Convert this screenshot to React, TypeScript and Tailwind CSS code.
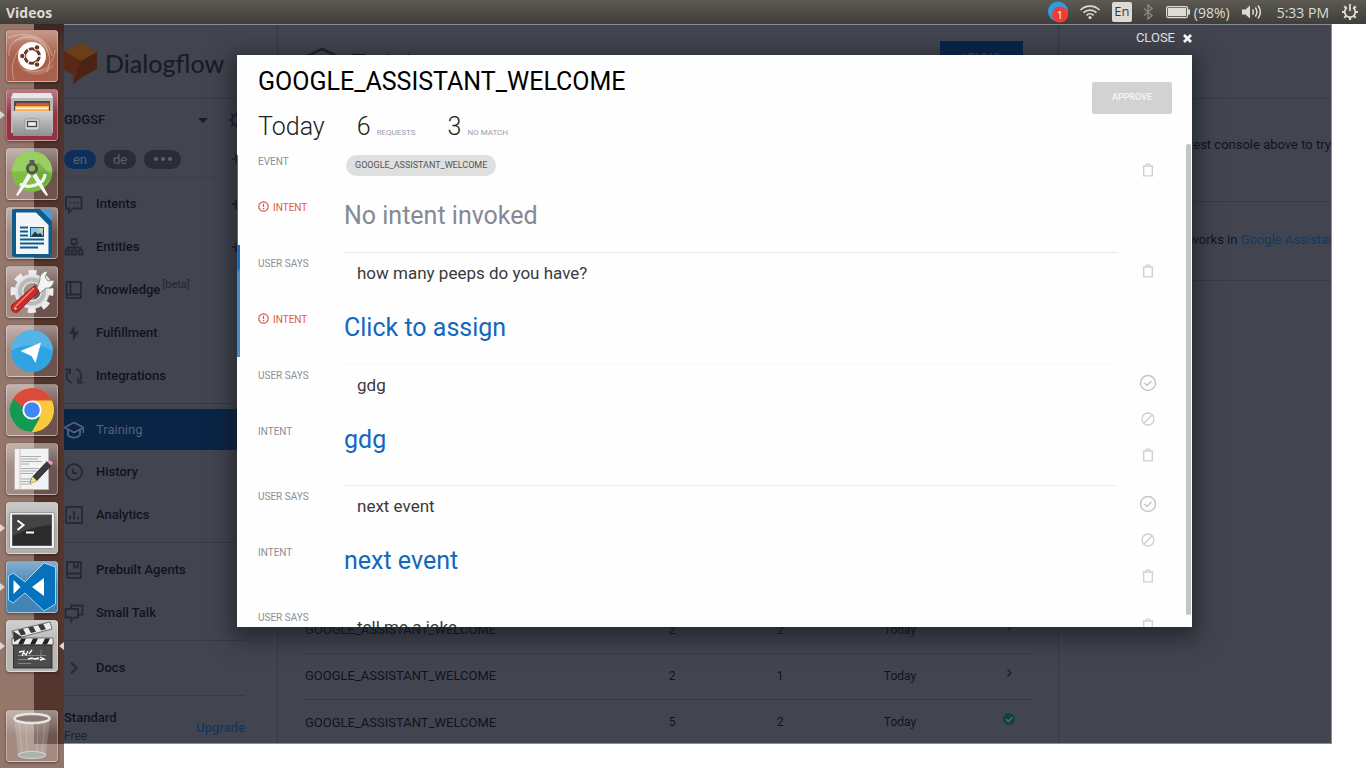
import React from "react";

type IconProps = { className?: string };

/* ---------- System bar ---------- */

function TelegramBadge() {
  return (
    <svg width="22" height="22" viewBox="0 0 22 22" aria-hidden="true">
      <circle cx="11" cy="10.5" r="10" fill="#2d9fe0" />
      <circle cx="13" cy="13.5" r="8" fill="#f23b36" />
      <text x="13" y="18" textAnchor="middle" fontSize="11" fill="#fff" fontFamily="Open Sans, sans-serif">1</text>
    </svg>
  );
}

function WifiIcon() {
  return (
    <svg width="22" height="16" viewBox="0 0 22 16" fill="none" stroke="#dfdbd2" strokeWidth="1.7" aria-hidden="true">
      <path d="M1.5 6C6.500 .7 15.500 .7 20.500 6M4.500 8.700C8 5.200 14 5.200 17.500 8.700M7.500 11.300C9.500 9.300 12.500 9.300 14.500 11.300" />
      <circle cx="11" cy="13.500" r="1.600" fill="#dfdbd2" stroke="none" />
    </svg>
  );
}

function BluetoothIcon() {
  return (
    <svg width="10" height="16" viewBox="0 0 10 16" fill="none" stroke="#8b8a83" strokeWidth="1.3" aria-hidden="true">
      <path d="M1 4.500l8 7-4 3.500V1l4 3.500-8 7" />
    </svg>
  );
}

function BatteryIcon() {
  return (
    <svg width="24" height="14" viewBox="0 0 24 14" aria-hidden="true">
      <rect x="0.600" y="1.600" width="21" height="11" rx="1.500" fill="none" stroke="#dfdbd2" strokeWidth="1.200" />
      <rect x="2" y="3" width="18.200" height="8.200" fill="#dfdbd2" />
      <rect x="22" y="4.500" width="2" height="5" fill="#dfdbd2" />
    </svg>
  );
}

function SpeakerIcon() {
  return (
    <svg width="20" height="16" viewBox="0 0 20 16" aria-hidden="true">
      <path d="M0 5.500h3.500L8 1.500v13L3.500 10.500H0z" fill="#dfdbd2" />
      <path d="M10.500 5.500q1.600 2.500 0 5M13.300 3.500q3.200 4.500 0 9M16 1.500q4.800 6.500 0 13" fill="none" stroke="#dfdbd2" strokeWidth="1.500" />
    </svg>
  );
}

function PowerGear() {
  return (
    <svg width="18" height="18" viewBox="-9 -9 18 18" aria-hidden="true">
      <g stroke="#dfdbd2" strokeWidth="2.200">
        <path d="M-8 0h3M5 0h3M0 5v3M-5.700-5.700l2 2M5.700-5.700l-2 2M-5.700 5.700l2-2M5.700 5.700l-2-2" />
      </g>
      <path d="M-3-4.400A5.300 5.300 0 1 0 3-4.400" fill="none" stroke="#dfdbd2" strokeWidth="1.800" />
      <path d="M0-8v7" stroke="#dfdbd2" strokeWidth="1.800" />
    </svg>
  );
}

function SystemBar() {
  return (
    <header className="flex h-6 shrink-0 items-center justify-between bg-linear-to-b from-[#5c5a52] to-[#3f3e39] pr-[7px] pl-1.5 font-['Open_Sans',sans-serif] text-[14px] text-[#dfdbd2]">
      <span className="font-bold">Videos</span>
      <div className="flex items-center">
        <TelegramBadge />
        <span className="ml-[10px]"><WifiIcon /></span>
        <span className="ml-[11px] flex h-5 w-5 items-center justify-center rounded-xs bg-[#dfdbd2] text-[13px] text-[#3c3b37]">En</span>
        <span className="ml-[11px]"><BluetoothIcon /></span>
        <span className="ml-[13px]"><BatteryIcon /></span>
        <span className="ml-1">(98%)</span>
        <span className="ml-3"><SpeakerIcon /></span>
        <span className="ml-[15px]">5:33 PM</span>
        <span className="ml-3"><PowerGear /></span>
      </div>
    </header>
  );
}

/* ---------- Launcher ---------- */

function UbuntuArt() {
  return (
    <>
      <g fill="none" stroke="#fff" strokeOpacity=".35" strokeWidth="1">
        <path d="M3 26C1 8 22 2 34 11c10 8 12 18 7 31M8 50C2 30 14 14 26 12M49 20c-2 18-14 24-30 20M2 8c18-8 40-2 44 18" />
      </g>
      <path d="M8 12C18 0 44 4 43 28c-5-18-20-22-35-16zM49 33c-8 18-36 14-38-4 6 14 22 16 38 4z" fill="#fff" fillOpacity=".16" />
      <circle cx="26" cy="26" r="14" fill="#fff" />
      <circle cx="26" cy="26" r="7.300" fill="none" stroke="#6b3324" strokeWidth="3" />
      <path d="M26 26l-5.500-10M26 26h12M26 26l-5.500 10" stroke="#fff" strokeWidth="1.300" />
      <circle cx="26" cy="26" r="5.600" fill="#fff" />
      <g fill="#6b3324" stroke="#fff" strokeWidth="1">
        <circle cx="16.300" cy="26" r="2.700" />
        <circle cx="31" cy="17.400" r="2.700" />
        <circle cx="31" cy="34.600" r="2.700" />
      </g>
    </>
  );
}

function FilesArt() {
  return (
    <>
      <path d="M7 4h38l2 5v35H5V9z" fill="#b9b9b9" />
      <path d="M7 4h38l2 5H5z" fill="#e8e6e6" />
      <rect x="8" y="12" width="36" height="11" fill="#4b4a48" />
      <path d="M10 15l1-1h32v9H10z" fill="#d9582a" />
      <path d="M9 17h34v6H9z" fill="#f5b35c" />
      <path d="M10 18.500h32v1.600H10z" fill="#fff2d0" />
      <path d="M6 22h41l-1 25H7z" fill="url(#metal)" />
      <rect x="19" y="30" width="14" height="11" rx="2" fill="#d9d9d9" stroke="#8a8a8a" strokeWidth=".7" />
      <rect x="21.500" y="32.500" width="9" height="5" fill="#eee" stroke="#444" strokeWidth="1.300" />
    </>
  );
}

function StudioArt() {
  return (
    <>
      <circle cx="26" cy="23.500" r="20.300" fill="#7fbd45" />
      <path d="M5.700 23.500a20.300 20.300 0 0 1 40.600 0z" fill="#98cf62" />
      <path d="M32 14l14 14-8 10-10-12z" fill="#5f9a31" fillOpacity=".5" />
      <path d="M22 25L10 47l1.500 1 3.500-4L25.500 28zM30 25l12 22-1.500 1-3.500-4L26.500 28z" fill="#f5f5f5" />
      <path d="M14 36c8 5 25 1 25-10" fill="none" stroke="#f5f5f5" strokeWidth="3.200" />
      <rect x="23.500" y="12" width="5" height="5" fill="#5a5a5a" />
      <circle cx="26" cy="20.500" r="4.500" fill="none" stroke="#555" strokeWidth="3.200" />
      <circle cx="26" cy="20.500" r="2.600" fill="#7fbd45" />
    </>
  );
}

function WriterArt() {
  return (
    <>
      <path d="M8 2h26l12 12v33q0 3-3 3H9q-3 0-3-3V4q0-2 2-2z" fill="#0d5c8e" />
      <path d="M34 2h12v12z" fill="#4d9bd0" />
      <path d="M10 5.500h20L42.500 18v29H10z" fill="#f3f5f7" />
      <path d="M14 20.500h8M14 24.500h8M14 28.500h8M14 32.500h24M14 36.500h24M14 40.500h18" stroke="#0d5c8e" strokeWidth="1.800" />
      <rect x="24.500" y="20.500" width="13" height="9" fill="#8fc5e8" stroke="#0d5c8e" />
      <circle cx="35" cy="23" r="1.800" fill="#f4d24a" />
      <path d="M25 29.500l4-5 3 3 2-1.500 3.500 3.500z" fill="#333" />
    </>
  );
}

function SettingsArt() {
  return (
    <>
      <circle cx="26" cy="25.500" r="13" fill="none" stroke="#e2e2e2" strokeWidth="9" />
      <circle cx="26" cy="25.500" r="19" fill="none" stroke="#ececec" strokeWidth="5" strokeDasharray="8 6.920" strokeDashoffset="4" />
      <circle cx="26" cy="25.500" r="12" fill="none" stroke="#b9b9b9" strokeWidth="4" />
      <path d="M31 22l3-8c-1-5 3-9 8-9l-3 6 3 4 6-1c0 5-4 9-8 8l-6 5z" fill="#f4f4f4" stroke="#777" strokeWidth=".8" />
      <path d="M28 20l5 5-20 20c-4 4-10-1-7-6z" fill="#cf2a2a" stroke="#8a1414" strokeWidth=".8" />
      <path d="M28 22L8 42" stroke="#f08a80" strokeWidth="1.500" />
      <circle cx="9.500" cy="42.500" r="1.800" fill="#e9b0a8" stroke="#8a1414" strokeWidth=".6" />
    </>
  );
}

function TelegramArt() {
  return (
    <>
      <circle cx="26" cy="26" r="21" fill="#2ea4e2" />
      <path d="M5 26a21 21 0 0 1 42 0C34 18 18 18 5 26z" fill="#fff" fillOpacity=".18" />
      <path d="M14.500 26L35 17.500 29.500 38l-4-7z" fill="#fff" />
    </>
  );
}

function ChromeArt() {
  return (
    <>
      <circle cx="26" cy="26" r="22" fill="#fbc93d" />
      <path d="M26 26L6.900 15A22 22 0 0 0 26 48l8-14z" fill="#129a55" />
      <path d="M26 26L6.900 15A22 22 0 0 1 46.500 18H26z" fill="#dc4a3e" />
      <path d="M6.900 15L17 31l9-13z" fill="#dc4a3e" />
      <path d="M6.900 15L17.500 32 26 36v-6z" fill="#129a55" />
      <path d="M26 16.500h19.500A22 22 0 0 1 26 48l9.500-17z" fill="#fbc93d" />
      <circle cx="26" cy="26" r="9.600" fill="#fff" />
      <circle cx="26" cy="26" r="7.800" fill="#4285f4" />
    </>
  );
}

function EditorArt() {
  return (
    <>
      <rect x="8.500" y="5.500" width="34" height="41" fill="#f1f2f4" stroke="#b5b5b5" />
      <path d="M14 6v40" stroke="#e6a1a1" strokeWidth=".8" />
      <path d="M15 13.500h20M15 16h17M15 18.500h21M15 21h8M15 25.500h18M15 28h16M15 30.500h12M15 36h10M15 38.500h9M15 41h11" stroke="#9b9b9b" strokeWidth=".8" />
      <path d="M24 40l2.500-6L41 18.500l4 4L30.500 38z" fill="#3b3b3b" stroke="#222" strokeWidth=".8" />
      <path d="M24 40.500l2.500-7 4.500 4.500z" fill="#f3df7c" />
      <path d="M41 18.500l2-1.500q3 1 4 3l-2 2.500z" fill="#e59ad0" />
    </>
  );
}

function TerminalArt() {
  return (
    <>
      <rect x="3.500" y="10.500" width="45" height="36" rx="1.500" fill="#f2f2f2" stroke="#9b9b9b" />
      <rect x="6.500" y="13" width="39" height="30.500" fill="#2b2b2b" stroke="#555" />
      <path d="M7 13.500h38v9Q24 25 7 34z" fill="#fff" fillOpacity=".12" />
      <path d="M11.500 18.500l6 4.500-6 5" fill="none" stroke="#fff" strokeWidth="2" />
      <path d="M20 30.500h8" stroke="#fff" strokeWidth="2" />
    </>
  );
}

function CodeArt() {
  return (
    <>
      <path d="M38 2l11.500 4v37L38 50 19 32 7 42l-4.500-3V15L7 12l12 9z" fill="#0672bd" stroke="#b9dcf2" strokeWidth=".9" />
      <path d="M7.500 19v14l7-7zM38 17v18l-12-9z" fill="#fff" />
    </>
  );
}

function ClapperArt() {
  return (
    <>
      <path d="M6 11L44 2l2 7L8 19z" fill="#ededed" stroke="#444" strokeWidth=".7" />
      <path d="M12 10l5-1.200 3 5.400-5 1.300zM22 7.500l5-1.200 3 5.400-5 1.300zM32 5l5-1.200 3 5.400-5 1.300z" fill="#3a3a3a" />
      <path d="M6 18h41v7H6z" fill="#ededed" stroke="#444" strokeWidth=".7" />
      <path d="M15 18.500h5l-3 6h-5zM27 18.500h5l-3 6h-5zM39 18.500h5l-3 6h-5z" fill="#222" />
      <path d="M7 11l9 6-8 5z" fill="#3a3a3a" />
      <rect x="7.500" y="25" width="38.500" height="23" fill="#4c4c4c" stroke="#222" strokeWidth=".8" />
      <path d="M12 35.500h28M12 39.500h28M12 43.500h13M35 30v5" stroke="#aaa" strokeWidth=".6" />
      <path d="M13 32l5-1-2 5M18 33l2 2 2-4M23 34l3-4M22 39l4-1 3 1 4-1M34 37l4 2-4 1" fill="none" stroke="#fff" strokeWidth="1.300" />
    </>
  );
}

function TrashArt() {
  return (
    <>
      <path d="M8 9l4 35c4 4 24 4 28 0l4-35z" fill="#fff" fillOpacity=".18" />
      <path d="M13 11l3 34M20 13l1 34M32 13l-1 34M39 11l-3 34" stroke="#fff" strokeOpacity=".2" />
      <ellipse cx="26" cy="45" rx="14" ry="3.500" fill="#aab2ab" stroke="#dfe3df" strokeWidth=".8" />
      <ellipse cx="26" cy="8.500" rx="17.500" ry="4.500" fill="#8d7771" stroke="#e3e6e2" strokeWidth="2.600" />
    </>
  );
}

type LauncherApp = { name: string; art: React.ReactNode; tile: string; running?: boolean; active?: boolean };

const apps: LauncherApp[] = [
  { name: "Search your computer", art: <UbuntuArt />, tile: "bg-[#a9614b]" },
  { name: "Files", art: <FilesArt />, tile: "bg-[#94323f]", running: true },
  { name: "Android Studio", art: <StudioArt />, tile: "bg-white/15" },
  { name: "Writer", art: <WriterArt />, tile: "bg-white/15" },
  { name: "System Settings", art: <SettingsArt />, tile: "bg-white/15" },
  { name: "Telegram", art: <TelegramArt />, tile: "bg-white/15" },
  { name: "Chrome", art: <ChromeArt />, tile: "bg-white/15" },
  { name: "Text Editor", art: <EditorArt />, tile: "bg-white/15" },
  { name: "Terminal", art: <TerminalArt />, tile: "bg-[#b0adab]", running: true },
  { name: "Code", art: <CodeArt />, tile: "bg-[#4384b4]", running: true },
  { name: "Videos", art: <ClapperArt />, tile: "bg-[#b9b6b4]", running: true, active: true },
];

function Tile({ app }: { app: LauncherApp }) {
  return (
    <button
      type="button"
      aria-label={app.name}
      className={`relative block size-[52px] rounded-[4px] shadow-[0_1px_3px_rgba(0,0,0,0.4)] ${app.tile}`}
    >
      <span className="absolute inset-0 rounded-[4px] border border-white/30 bg-linear-to-b from-white/35 to-transparent to-50%" />
      <svg viewBox="0 0 52 52" className="relative size-[52px]" aria-hidden="true">
        {app.art}
      </svg>
      {app.running && <span className="absolute top-[22px] -left-1.5 border-y-4 border-l-[5px] border-y-transparent border-l-[#d9d6d4]" />}
      {app.active && <span className="absolute top-[22px] -right-1.5 border-y-4 border-r-[5px] border-y-transparent border-r-[#d9d6d4]" />}
    </button>
  );
}

function Launcher() {
  return (
    <nav
      aria-label="Launcher"
      className="relative flex w-16 shrink-0 flex-col justify-between bg-[linear-gradient(90deg,#95766b_0_34px,transparent_34px),linear-gradient(0deg,#95766b_0_24px,#54362e_24px_75%,#4c312c_97%,#3a2625)] p-1.5"
    >
      <div className="flex flex-col gap-[7px]">
        {apps.map((app) => (
          <Tile key={app.name} app={app} />
        ))}
      </div>
      <Tile app={{ name: "Trash", art: <TrashArt />, tile: "bg-white/15" }} />
      <svg width="0" height="0" className="absolute" aria-hidden="true">
        <defs>
          <linearGradient id="metal" x1="0" y1="0" x2="0" y2="1">
            <stop offset="0" stopColor="#d2d2d2" />
            <stop offset="1" stopColor="#8f8f8f" />
          </linearGradient>
        </defs>
      </svg>
    </nav>
  );
}

/* ---------- Console sidebar ---------- */

function Glyph({ children }: { children: React.ReactNode }) {
  return (
    <svg width="20" height="20" viewBox="0 0 20 20" fill="none" stroke="currentColor" strokeWidth="1.800" className="shrink-0" aria-hidden="true">
      {children}
    </svg>
  );
}

const glyphs = {
  intents: <path d="M2 3h15.500v11.500H9L5 18v-3.500H2zM5.500 8.700h1.500M9 8.700h1.500M12.500 8.700H14" />,
  entities: <path d="M7.500 2h5v5h-5zM1.500 13.500h4v4h-4zM8 13.500h4v4H8zM14.500 13.500h4v4h-4zM10 7v6.500M3.500 13.500v-3h13v3" />,
  knowledge: <path d="M2.500 2h14.500v16H4q-1.500 0-1.500-1.500zM6.500 2v12.500M2.500 16q0-1.500 2-1.500H17" />,
  fulfillment: <path d="M10.500 2L5 11h4v7l6-9.500h-4.500z" fill="currentColor" stroke="none" />,
  integrations: <path d="M8 17A7.500 7.500 0 0 1 4 5.500M12 3a7.500 7.500 0 0 1 4 11.500M1 3.500h5v5M19 16.500h-5v-5" />,
  training: <path d="M10 2.500L.5 7.500l9.500 5 9.500-5zM4 9.500v5.500c3 3.500 9 3.500 12 0V9.500M19.500 7.500V13" />,
  history: <><circle cx="10" cy="10" r="8" /><path d="M9 6.500V11h4" /></>,
  analytics: <path d="M2 2h16v16H2zM6 14.500v-4M10 14.500V6M14 14.500v-3" />,
  prebuilt: <path d="M3 2h14v16H5q-2 0-2-2zM3 15q0-1.500 2-1.500h12M10 2v5.500l2-1.500 2 1.500V2" />,
  talk: <path d="M7 6V2.500h11.500v9H15M1.500 6H14v8.500h-4L7 18v-3.500H1.500z" />,
  docs: <path d="M7 4.500l5.500 5.500L7 15.500" strokeWidth="2.200" />,
};

function NavItem({ icon, label, beta, add }: { icon: keyof typeof glyphs; label: string; beta?: boolean; add?: boolean }) {
  return (
    <a href="#" className="flex h-[43px] shrink-0 items-center pr-9">
      <span className="flex w-8 text-[#272a35]"><Glyph>{glyphs[icon]}</Glyph></span>
      <span>{label}</span>
      {beta && <span className="mb-2 ml-0.5 text-[11px] font-normal text-[#242733]">[beta]</span>}
      {add && <span className="ml-auto text-[18px] leading-none text-[#20232d]">+</span>}
    </a>
  );
}

function Divider() {
  return <div className="mt-1.5 mr-8 mb-[5px] h-px shrink-0 bg-[#363a45]" />;
}

function Sidebar() {
  return (
    <aside className="flex w-[214px] shrink-0 flex-col border-r border-[#373b46] font-medium">
      <div className="flex h-[73px] shrink-0 items-center pt-1">
        <svg width="34" height="44" viewBox="0 0 34 44" className="shrink-0" aria-hidden="true">
          <path d="M0 9L17 1l16 9-16 9z" fill="#6b3e17" />
          <path d="M0 9l17 10v16L9 42v-9L0 28z" fill="#5b2816" />
          <path d="M33 10v17L17 36 9 42l8-23z" fill="#4b2315" />
        </svg>
        <span className="ml-[7px] font-['Lato',sans-serif] text-[25px] font-medium text-[#191c27]">Dialogflow</span>
      </div>
      <div className="mr-8 h-px shrink-0 bg-[#363a45]" />
      <div className="flex h-[42px] shrink-0 items-center">
        <select aria-label="Agent" defaultValue="GDGSF" className="w-[134px] appearance-none bg-transparent text-[13px] text-[#10131f]">
          <option>GDGSF</option>
        </select>
        <span className="border-x-[5px] border-t-[5px] border-x-transparent border-t-[#191c27]" />
        <svg width="18" height="18" viewBox="-9 -9 18 18" fill="none" stroke="#20232d" strokeWidth="2" className="ml-5" aria-hidden="true">
          <circle r="5" />
          <path d="M-8 0h3M0-8v3M0 5v3M-5.700-5.700l2 2M-5.700 5.700l2-2" />
        </svg>
      </div>
      <div className="flex h-9 shrink-0 items-center gap-2 text-[13px] font-normal text-[#5c606b]">
        <button type="button" className="h-[19px] w-8 rounded-full bg-[#0f2f5a] leading-none">en</button>
        <button type="button" className="h-[19px] w-8 rounded-full bg-[#2a2d36] leading-none">de</button>
        <button type="button" aria-label="More languages" className="flex h-[19px] w-[37px] items-center justify-center gap-[3px] rounded-full bg-[#2a2d36]">
          <span className="size-1 rounded-full bg-[#5c606b]" />
          <span className="size-1 rounded-full bg-[#5c606b]" />
          <span className="size-1 rounded-full bg-[#5c606b]" />
        </button>
        <span className="ml-auto pr-9 text-[18px] text-[#20232d]">+</span>
      </div>
      <div className="mr-8 mb-1 h-px shrink-0 bg-[#3c404b]" />
      <NavItem icon="intents" label="Intents" add />
      <NavItem icon="entities" label="Entities" add />
      <NavItem icon="knowledge" label="Knowledge" beta />
      <NavItem icon="fulfillment" label="Fulfillment" />
      <NavItem icon="integrations" label="Integrations" />
      <Divider />
      <a href="#" aria-current="page" className="flex h-[41px] shrink-0 items-center bg-[#0a2445] font-normal text-[#52607a]">
        <span className="flex w-8"><Glyph>{glyphs.training}</Glyph></span>
        Training
      </a>
      <NavItem icon="history" label="History" />
      <NavItem icon="analytics" label="Analytics" />
      <Divider />
      <NavItem icon="prebuilt" label="Prebuilt Agents" />
      <NavItem icon="talk" label="Small Talk" />
      <Divider />
      <NavItem icon="docs" label="Docs" />
      <Divider />
      <div className="flex h-12 shrink-0 items-center justify-between pr-8">
        <div className="pt-1 leading-[18px]">
          <div>Standard</div>
          <div className="text-[12px] font-normal text-[#20232d]">Free</div>
        </div>
        <a href="#" className="pt-1.5 text-[#16365c]">Upgrade</a>
      </div>
    </aside>
  );
}

/* ---------- Training list behind the dialog ---------- */

const rows = [
  { id: 1, requests: 2, noMatch: 2, done: false },
  { id: 2, requests: 2, noMatch: 1, done: false },
  { id: 3, requests: 5, noMatch: 2, done: true },
];

function TrainingPage() {
  return (
    <main className="flex min-w-0 flex-1 flex-col justify-between border-r border-[#373b46] pr-[26px] pl-[27px]">
      <div className="flex h-[73px] items-start pt-4">
        <svg width="34" height="34" viewBox="0 0 34 34" fill="none" stroke="#20232d" strokeWidth="2.500" aria-hidden="true">
          <path d="M17 8L2 15l15 8 15-8z" />
        </svg>
        <h1 className="mt-2 ml-3 text-[24px] leading-7 font-medium text-[#11141f]">Training</h1>
        <button type="button" className="mr-[9px] ml-auto h-8 w-[83px] bg-[#07234a] text-[10px] text-[#3d5270]">UPLOAD</button>
      </div>
      <table className="-mb-0.5 w-full table-fixed text-[13px] text-[#10131f]">
        <tbody>
          {rows.map((row) => (
            <tr key={row.id} className="h-[46px] border-t border-[#353944] first:border-t-0">
              <td className="p-0">GOOGLE_ASSISTANT_WELCOME</td>
              <td className="w-[108px] p-0 pr-3 text-center text-[12px]">{row.requests}</td>
              <td className="w-[108px] p-0 pr-3 text-center text-[12px]">{row.noMatch}</td>
              <td className="w-[120px] p-0 text-center text-[12px]">Today</td>
              <td className="w-[72px] p-0 pb-1.5">
                <svg width="14" height="14" viewBox="0 0 14 14" fill="none" className="ml-[42px]" aria-hidden="true">
                  {row.done ? (
                    <>
                      <circle cx="7" cy="7" r="6" fill="#12423f" />
                      <path d="M4 7l2.500 2.500L10.500 5" stroke="#4c6a6c" strokeWidth="1.600" />
                    </>
                  ) : (
                    <path d="M5.500 3.500L9 7l-3.500 3.500" stroke="#1c1f2a" strokeWidth="1.400" />
                  )}
                </svg>
              </td>
            </tr>
          ))}
        </tbody>
      </table>
    </main>
  );
}

function TestPanel() {
  return (
    <aside className="w-[272px] shrink-0 overflow-hidden text-[13px] leading-5 whitespace-nowrap text-[#10131f]">
      <div className="h-[74px] border-b border-[#373b46]" />
      <p className="h-[103px] border-b border-[#373b46] pt-9 pl-[130px]">test console above to try</p>
      <p className="h-[79px] border-b border-[#373b46] pt-7 pl-[130px]">
        works in <a href="#" className="text-[#123a62]">Google Assistant</a>
      </p>
    </aside>
  );
}

/* ---------- Training dialog ---------- */

function TrashIcon() {
  return (
    <svg width="12" height="14" viewBox="0 0 12 14" fill="none" stroke="#cfcfcf" strokeWidth="1.300" aria-hidden="true">
      <path d="M.5 3.200h11M1.700 3.200v9.600h8.600V3.200M3.500 3L4.500 1.200h3L8.500 3" />
    </svg>
  );
}

function BlockIcon() {
  return (
    <svg width="14" height="14" viewBox="0 0 14 14" fill="none" stroke="#cfcfcf" strokeWidth="1.300" aria-hidden="true">
      <circle cx="7" cy="7" r="6" />
      <path d="M2.800 11.200l8.400-8.400" />
    </svg>
  );
}

function CheckIcon() {
  return (
    <svg width="18" height="18" viewBox="0 0 18 18" fill="none" stroke="#c6c6c6" strokeWidth="1.500" aria-hidden="true">
      <circle cx="9" cy="9" r="7.500" />
      <path d="M5.500 9l2.500 2.500L12.500 7" />
    </svg>
  );
}

function ActionButton({ label, children }: { label: string; children: React.ReactNode }) {
  return (
    <button type="button" aria-label={label} className="flex h-9 w-full items-center justify-center">
      {children}
    </button>
  );
}

function AlertIcon({ className }: IconProps) {
  return (
    <svg width="11" height="11" viewBox="0 0 11 11" fill="none" stroke="#e0583f" strokeWidth="1.200" className={className} aria-hidden="true">
      <circle cx="5.500" cy="5.500" r="4.700" />
      <path d="M5.500 2.700v3.300M5.500 7v1.300" />
    </svg>
  );
}

function IntentLabel({ alert }: { alert?: boolean }) {
  return alert ? (
    <div className="flex w-[86px] shrink-0 items-start pt-1 text-[10px] leading-4 text-[#e0583f]">
      <AlertIcon className="mt-px mr-1" />
      INTENT
    </div>
  ) : (
    <div className="w-[86px] shrink-0 pt-1 text-[10px] leading-4 text-[#8b8d98]">INTENT</div>
  );
}

type Entry = { id: string; phrase: string; intent?: string; alert?: boolean; full?: boolean; line: string };

const entries: Entry[] = [
  { id: "peeps", phrase: "how many peeps do you have?", intent: "Click to assign", alert: true, line: "border-[#e6e6e6]" },
  { id: "gdg", phrase: "gdg", intent: "gdg", full: true, line: "border-[#f7f7f7]" },
  { id: "next", phrase: "next event", intent: "next event", full: true, line: "border-[#efefef]" },
  { id: "joke", phrase: "tell me a joke", line: "border-white" },
];

function EntryRow({ entry }: { entry: Entry }) {
  return (
    <li className={`flex ${entry.full ? "h-[121px]" : "h-28"}`}>
      <div className="min-w-0 flex-1">
        <div className="flex h-14">
          <label htmlFor={entry.id} className="w-[86px] shrink-0 pt-1 text-[10px] leading-4 text-[#8b8d98]">USER SAYS</label>
          <input id={entry.id} defaultValue={entry.phrase} className={`h-10 min-w-0 flex-1 border-t bg-transparent pl-[13px] text-[17px] text-[#3a3a3a] outline-none ${entry.line}`} />
        </div>
        {entry.intent && (
          <div className="flex">
            <IntentLabel alert={entry.alert} />
            <button type="button" className="h-10 text-[25px] leading-10 text-[#1268bd]">{entry.intent}</button>
          </div>
        )}
      </div>
      <div className="w-[62px] shrink-0 pt-px">
        {entry.full && (
          <>
            <ActionButton label="Accept"><CheckIcon /></ActionButton>
            <ActionButton label="Exclude"><BlockIcon /></ActionButton>
          </>
        )}
        <ActionButton label="Delete"><TrashIcon /></ActionButton>
      </div>
    </li>
  );
}

function TrainingDialog() {
  return (
    <div className="absolute inset-0 flex flex-col pr-[139px] pb-[116px] pl-[173px]">
      <button type="button" className="mb-1 flex h-[26px] shrink-0 items-center gap-2 self-end text-[13px] text-[#e4e5e8]">
        CLOSE
        <svg width="9" height="9" viewBox="0 0 9 9" stroke="#fff" strokeWidth="2.800" aria-hidden="true">
          <path d="M1 1l7 7M8 1L1 8" />
        </svg>
      </button>
      <section
        role="dialog"
        aria-label="GOOGLE_ASSISTANT_WELCOME"
        className="relative flex min-h-0 flex-1 flex-col overflow-hidden bg-[#fefefe] shadow-[0_6px_20px_6px_rgba(20,24,32,0.6)]"
      >
        <div className="flex h-[85px] shrink-0 items-start justify-between pr-5 pl-[21px]">
          <div className="pt-[13px]">
            <h2 className="text-[25px] leading-7 text-black">GOOGLE_ASSISTANT_WELCOME</h2>
            <div className="mt-[17px] flex items-baseline text-[25px] leading-7 font-light text-[#222]">
              <span>Today</span>
              <span className="ml-8">6</span>
              <span className="ml-1.5 text-[8px] font-normal text-[#9a9ca6]">REQUESTS</span>
              <span className="ml-8">3</span>
              <span className="ml-1.5 text-[8px] font-normal text-[#9a9ca6]">NO MATCH</span>
            </div>
          </div>
          <button type="button" disabled className="mt-[27px] h-8 w-20 rounded-xs bg-[#d2d2d2] text-[9px] font-medium text-[#f6f6f6]">APPROVE</button>
        </div>
        <ul className="min-h-0 flex-1 overflow-hidden pr-[13px] pl-[21px]">
          <li className="flex h-28">
            <div className="min-w-0 flex-1">
              <div className="flex h-14">
                <div className="w-[88px] shrink-0 pt-3.5 text-[10px] leading-4 text-[#8b8d98]">EVENT</div>
                <div className="pt-[15px]">
                  <span className="flex h-[21px] items-center rounded-full bg-[#dfdfdf] px-[9px] text-[9px] text-[#555]">GOOGLE_ASSISTANT_WELCOME</span>
                </div>
              </div>
              <div className="flex">
                <IntentLabel alert />
                <p className="text-[25px] leading-10 text-[#858896]">No intent invoked</p>
              </div>
            </div>
            <div className="w-[62px] shrink-0 pt-3">
              <ActionButton label="Delete"><TrashIcon /></ActionButton>
            </div>
          </li>
          {entries.map((entry) => (
            <EntryRow key={entry.id} entry={entry} />
          ))}
        </ul>
        <span className="absolute top-[100px] left-0 h-[92px] w-px bg-[#2a7fc0]" />
        <span className="absolute top-[190px] left-0 h-[112px] w-[3px] bg-linear-to-b from-[#1b6fc2] from-20% to-[#4591c6] to-25%" />
        <span className="absolute top-[89px] right-px h-[471px] w-[5px] rounded-full bg-[#c3c5c5]" />
      </section>
    </div>
  );
}

export default function App() {
  return (
    <div className="flex h-screen flex-col overflow-hidden bg-[#fefffe]">
      <SystemBar />
      <div className="flex min-h-0 flex-1">
        <Launcher />
        <div className="flex min-w-0 flex-1 pr-[34px] pb-6 font-['Roboto',sans-serif] text-[13px] text-[#10131f]">
          <div className="relative flex min-w-0 flex-1 overflow-hidden border-t border-r border-b border-[#8b8e96] bg-[#42454f]">
            <Sidebar />
            <TrainingPage />
            <TestPanel />
            <TrainingDialog />
          </div>
        </div>
      </div>
    </div>
  );
}
